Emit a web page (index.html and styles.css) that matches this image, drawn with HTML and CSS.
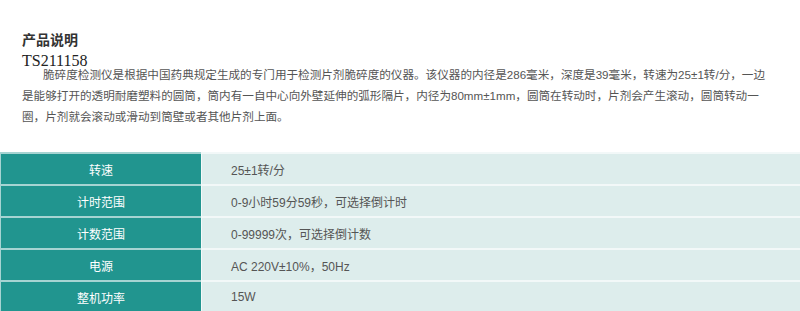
FILE: index.html
```html
<!DOCTYPE html>
<html lang="zh-CN">
<head>
<meta charset="utf-8">
<link rel="stylesheet" href="styles.css">
</head>
<body>
<div class="intro">
  <h3 class="title">产品说明</h3>
  <div class="code">TS211158</div>
  <p class="desc">脆碎度检测仪是根据中国药典规定生成的专门用于检测片剂脆碎度的仪器。该仪器的内径是286毫米，深度是39毫米，转速为25±1转/分，一边是能够打开的透明耐磨塑料的圆筒，筒内有一自中心向外壁延伸的弧形隔片，内径为80mm±1mm，圆筒在转动时，片剂会产生滚动，圆筒转动一圈，片剂就会滚动或滑动到筒壁或者其他片剂上面。</p>
</div>
<table class="spec">
  <colgroup><col class="c1"><col class="c2"></colgroup>
  <tr><td class="k">转速</td><td class="v">25±1转/分</td></tr>
  <tr><td class="k">计时范围</td><td class="v">0-9小时59分59秒，可选择倒计时</td></tr>
  <tr><td class="k">计数范围</td><td class="v">0-99999次，可选择倒计数</td></tr>
  <tr><td class="k">电源</td><td class="v">AC 220V±10%，50Hz</td></tr>
  <tr><td class="k">整机功率</td><td class="v">15W</td></tr>
</table>
</body>
</html>
```
FILE: styles.css
```css
html, body {
  margin: 0;
  padding: 0;
  background: #fff;
}
body {
  font-family: "Liberation Sans", "Noto Sans CJK SC", sans-serif;
  width: 800px;
  overflow: hidden;
}
.intro {
  padding: 30px 0 0 22px;
  width: 750px;
}
.title {
  margin: 0;
  font-size: 14px;
  line-height: 20px;
  font-weight: 700;
  color: #333;
}
.code {
  margin-top: 3px;
  font-family: "Liberation Serif", serif;
  font-size: 16px;
  line-height: 16px;
  color: #222;
}
.desc {
  margin: -5px 0 0;
  font-size: 11.6px;
  line-height: 21px;
  color: #555;
  text-indent: 21px;
}
.spec {
  margin-top: 25px;
  width: 800px;
  table-layout: fixed;
  border-collapse: separate;
  border-spacing: 0;
  font-size: 12px;
}
.c1 { width: 201px; }
.spec td {
  height: 30px;
  padding: 0;
  border-top: 2px solid rgba(255, 255, 255, 0.6);
}
.k {
  background: #21958f;
  color: #fff;
  text-align: center;
  border-left: 1px solid rgba(255, 255, 255, 0.6);
}
.v {
  background: #ddedec;
  color: #555;
  padding-left: 29px !important;
  border-left: 1px solid rgba(255, 255, 255, 0.7);
}
```
